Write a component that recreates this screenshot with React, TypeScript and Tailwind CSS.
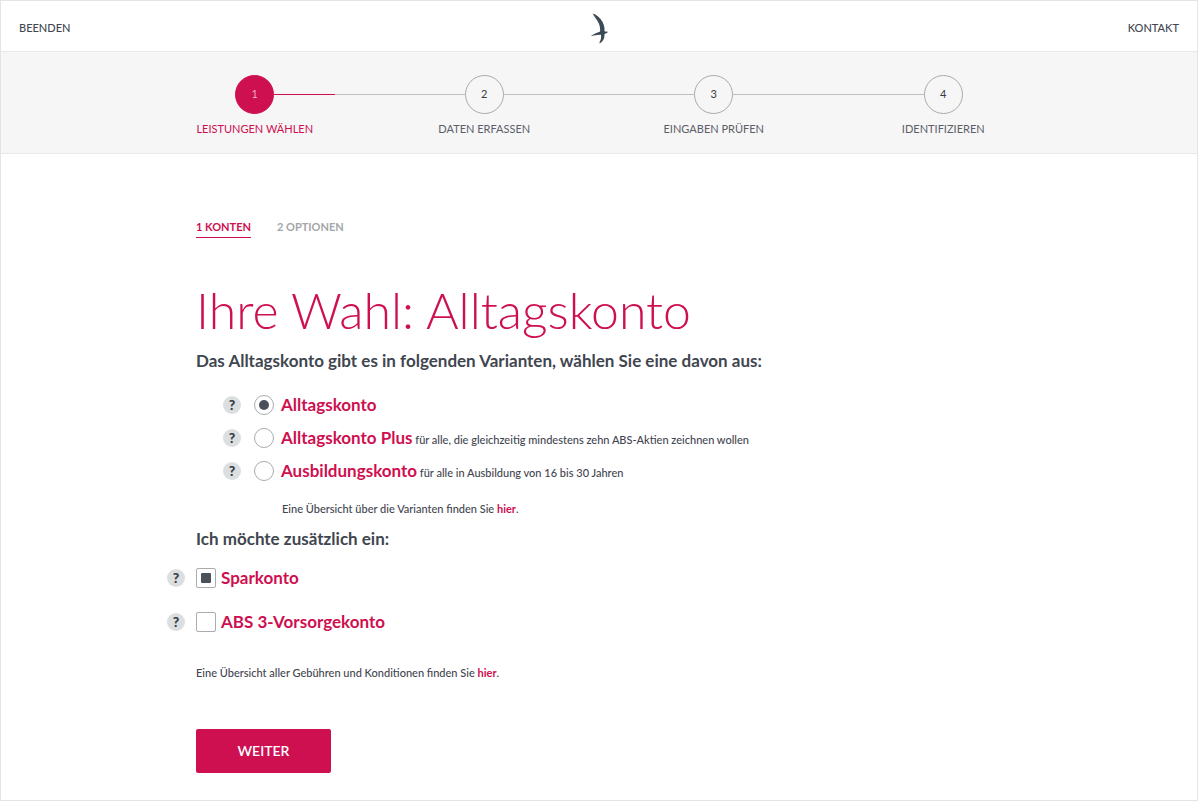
import { useState } from 'react'

const steps = ['Leistungen wählen', 'Daten erfassen', 'Eingaben prüfen', 'Identifizieren']

const variants = [
  { id: 'alltag', name: 'Alltagskonto', hint: '' },
  { id: 'plus', name: 'Alltagskonto Plus', hint: 'für alle, die gleichzeitig mindestens zehn ABS-Aktien zeichnen wollen' },
  { id: 'ausbildung', name: 'Ausbildungskonto', hint: 'für alle in Ausbildung von 16 bis 30 Jahren' },
]

const extras = [
  { id: 'spar', name: 'Sparkonto' },
  { id: 'vorsorge', name: 'ABS 3-Vorsorgekonto' },
]

function BirdLogo() {
  return (
    <svg viewBox="0 0 54 92" className="w-[18px] h-[31px]" fill="#3b4a57" role="img" aria-label="ABS">
      <path d="M8 1C18 4 31 13 38 27C43 37 45 48 43 57L30 59C32 46 29 34 23 24C19 17 13 11 8 1Z" />
      <path d="M2 69C12 61 24 58 31 55C36 52 42 52 45 55L54 56C51 60 47 62 42 63C29 65 14 65 2 69Z" />
      <path d="M32 61L43 61C45 72 41 84 29 91C28 88 29 85 31 82C34 76 34 69 32 61Z" />
    </svg>
  )
}

function HelpButton({ topic }: { topic: string }) {
  return (
    <button
      type="button"
      aria-label={`Hilfe zu ${topic}`}
      className="size-[18px] shrink-0 rounded-full bg-[#dcdfe0] text-[#353c46] text-sm leading-none font-black flex items-center justify-center"
    >
      ?
    </button>
  )
}

function Stepper({ current }: { current: number }) {
  return (
    <nav className="bg-[#f6f6f6] border-y border-[#e9e9e9] pt-[23px] pb-4">
      <ol className="max-w-[918px] mx-auto grid grid-cols-4">
        {steps.map((s, i) => (
          <li key={s} className="flex flex-col items-center">
            <div className="w-full flex items-center">
              <span className={`flex-1 h-px ${i > 0 ? 'bg-[#bcbec0]' : ''}`} />
              <span
                className={`size-[39px] rounded-full border text-[11px] flex items-center justify-center ${
                  i === current ? 'bg-[#ce0f50] border-[#ce0f50] text-white font-light' : 'border-[#a9abad] text-[#353c46]'
                }`}
              >
                {i + 1}
              </span>
              <span className="flex-1 flex">
                {i === current && <span className="h-px w-[61px] bg-[#ce0f50]" />}
                <span className={`flex-1 h-px ${i < steps.length - 1 ? 'bg-[#bcbec0]' : ''}`} />
              </span>
            </div>
            <span className={`mt-[7px] text-[11px] leading-4 uppercase ${i === current ? 'text-[#ce0f50]' : 'text-[#5b6068]'}`}>
              {s}
            </span>
          </li>
        ))}
      </ol>
    </nav>
  )
}

export default function App() {
  const [variant, setVariant] = useState('alltag')
  const [chosen, setChosen] = useState<string[]>(['spar'])

  const toggle = (id: string) =>
    setChosen(chosen.includes(id) ? chosen.filter((c) => c !== id) : [...chosen, id])

  return (
    <div className="min-h-screen mr-0.5 border border-[#e4e4e4] bg-white font-[Lato,sans-serif] text-[#3f4650]">
      <header className="h-[50px] px-[18px] pt-1 grid grid-cols-3 items-center text-[11px] font-medium">
        <a href="#beenden" className="justify-self-start">BEENDEN</a>
        <a href="#start" className="justify-self-center"><BirdLogo /></a>
        <a href="#kontakt" className="justify-self-end">KONTAKT</a>
      </header>

      <Stepper current={0} />

      <main className="max-w-[922px] mx-auto px-[58px] pt-[65px] pb-6">
        <div className="flex gap-[26px] text-[11px] leading-4 font-bold">
          <a href="#konten" className="pb-0.5 border-b border-[#ce0f50] text-[#ce0f50]">1 KONTEN</a>
          <a href="#optionen" className="text-[#a3a6aa]">2 OPTIONEN</a>
        </div>

        <h1 className="mt-10 text-[50px] leading-[64px] font-light text-[#ce0f50]">Ihre Wahl: Alltagskonto</h1>

        <form className="mt-[7px]" onSubmit={(e) => e.preventDefault()}>
          <fieldset>
            <legend className="text-[17px] leading-6 font-bold">
              Das Alltagskonto gibt es in folgenden Varianten, wählen Sie eine davon aus:
            </legend>
            <div className="mt-[15px] ml-[27px]">
              {variants.map((v) => (
                <div key={v.id} className="h-[33px] flex items-center">
                  <HelpButton topic={v.name} />
                  <input
                    id={v.id}
                    type="radio"
                    name="variante"
                    checked={variant === v.id}
                    onChange={() => setVariant(v.id)}
                    className="ml-[13px] size-5 shrink-0 appearance-none rounded-full border border-[#a9abad] grid place-content-center checked:before:size-[10px] checked:before:rounded-full checked:before:bg-[#4b515b]"
                  />
                  <label htmlFor={v.id} className="ml-[7px]">
                    <span className="text-[17px] font-bold text-[#ce0f50]">{v.name}</span>
                    {v.hint && <span className="text-[11px] font-medium"> {v.hint}</span>}
                  </label>
                </div>
              ))}
            </div>
          </fieldset>
          <p className="mt-[14px] ml-[86px] text-[11px] leading-4 font-medium">
            Eine Übersicht über die Varianten finden Sie <a href="#varianten" className="font-bold text-[#ce0f50]">hier</a>.
          </p>

          <fieldset className="mt-[10px]">
            <legend className="text-[17px] leading-6 font-bold">Ich möchte zusätzlich ein:</legend>
            <div className="mt-[5px] -ml-[29px]">
              {extras.map((x) => (
                <div key={x.id} className="h-11 flex items-center">
                  <HelpButton topic={x.name} />
                  <input
                    id={x.id}
                    type="checkbox"
                    checked={chosen.includes(x.id)}
                    onChange={() => toggle(x.id)}
                    className="ml-[11px] size-5 shrink-0 appearance-none rounded-xs border border-[#a9abad] grid place-content-center checked:before:size-[10px] checked:before:rounded-[1px] checked:before:bg-[#4b515b]"
                  />
                  <label htmlFor={x.id} className="ml-[5px] text-[17px] font-bold text-[#ce0f50]">{x.name}</label>
                </div>
              ))}
            </div>
          </fieldset>
          <p className="mt-[21px] text-[11px] leading-4 font-medium">
            Eine Übersicht aller Gebühren und Konditionen finden Sie <a href="#konditionen" className="font-bold text-[#ce0f50]">hier</a>.
          </p>

          <button type="submit" className="mt-12 w-[135px] h-11 rounded-xs bg-[#ce0f50] text-white text-sm font-semibold">
            WEITER
          </button>
        </form>
      </main>
    </div>
  )
}
